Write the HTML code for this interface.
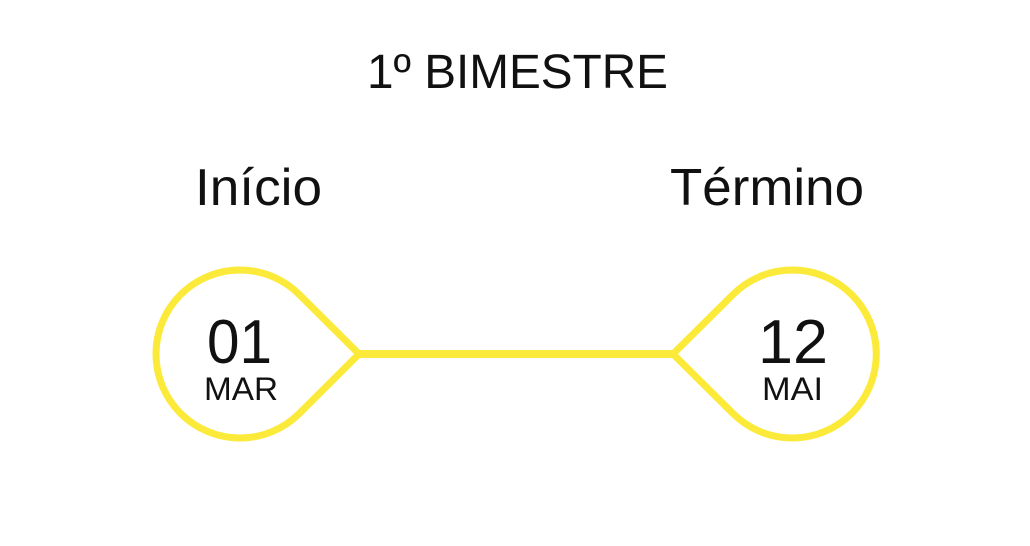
<!DOCTYPE html>
<html><head><meta charset="utf-8"><style>
html,body{margin:0;padding:0;background:#fff;width:1030px;height:546px;overflow:hidden}
svg{display:block}
text{font-family:"Liberation Sans",sans-serif;fill:#111}
</style></head><body>
<svg width="1030" height="546" viewBox="0 0 1030 546">
<text x="367" y="88" font-size="48" textLength="301" lengthAdjust="spacingAndGlyphs">1º BIMESTRE</text>
<text x="195" y="205" font-size="52" textLength="127" lengthAdjust="spacingAndGlyphs">Início</text>
<text x="670" y="205" font-size="52" textLength="194" lengthAdjust="spacingAndGlyphs">Término</text>
<g fill="none" stroke="#FCEA3A" stroke-width="7" stroke-linejoin="miter">
<path d="M359,354 L299.4,294.6 A84,84 0 1 0 299.4,413.4 Z"/>
<path d="M673,354 L732.9,294.6 A84,84 0 1 1 732.9,413.4 Z"/>
</g>
<rect x="358" y="350" width="316" height="8" fill="#FCEA3A"/>
<text x="207" y="363" font-size="62" textLength="65" lengthAdjust="spacingAndGlyphs">01</text>
<text x="204" y="400" font-size="32" textLength="74" lengthAdjust="spacingAndGlyphs">MAR</text>
<text x="758" y="363" font-size="62" textLength="70" lengthAdjust="spacingAndGlyphs">12</text>
<text x="762" y="400" font-size="32" textLength="61" lengthAdjust="spacingAndGlyphs">MAI</text>
</svg>
</body></html>
